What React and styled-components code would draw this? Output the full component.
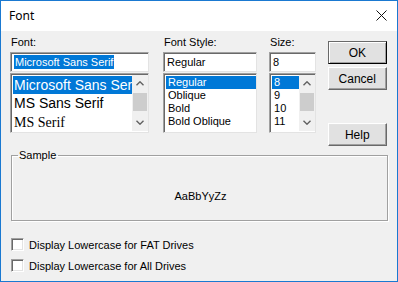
import React from "react";
import styled, { createGlobalStyle } from "styled-components";

const GlobalStyle = createGlobalStyle`
  html, body {
    margin: 0;
    padding: 0;
    background: #ffffff;
  }
  * {
    box-sizing: border-box;
  }
`;

const fonts = [
  { name: "Microsoft Sans Serif", family: "'Liberation Sans', Arial, sans-serif" },
  { name: "MS Sans Serif", family: "'Liberation Sans', Arial, sans-serif" },
  { name: "MS Serif", family: "'Liberation Serif', 'Times New Roman', serif" },
];

const styles = ["Regular", "Oblique", "Bold", "Bold Oblique"];
const sizes = ["8", "9", "10", "11"];

const Chevron = ({ down }) => (
  <svg width="8" height="5" viewBox="0 0 8 5">
    <polyline
      points={down ? "0.5,0.8 4,4.2 7.5,0.8" : "0.5,4.2 4,0.8 7.5,4.2"}
      fill="none"
      stroke="#606060"
      strokeWidth="1.4"
    />
  </svg>
);

const Scroll = () => (
  <ScrollBar>
    <Arrow>
      <Chevron />
    </Arrow>
    <Thumb />
    <Track />
    <Arrow>
      <Chevron down />
    </Arrow>
  </ScrollBar>
);

const App = () => {
  return (
    <>
      <GlobalStyle />
      <Window>
        <TitleBar>
          <span>Font</span>
          <svg width="11" height="11" viewBox="0 0 11 11">
            <path d="M0.5 0.5 L10.5 10.5 M10.5 0.5 L0.5 10.5" stroke="#111" strokeWidth="1" />
          </svg>
        </TitleBar>
        <Body>
          <TopRow>
            <Column $width={139} $gap={14}>
              <Label>Font:</Label>
              <TextBox>
                <Selected>Microsoft Sans Serif</Selected>
              </TextBox>
              <ListBox>
                <Items>
                  {fonts.map((f, i) => (
                    <BigItem key={f.name} $active={i === 0} style={{ fontFamily: f.family }}>
                      {f.name}
                    </BigItem>
                  ))}
                </Items>
                <Scroll />
              </ListBox>
            </Column>
            <Column $width={95} $gap={12}>
              <Label>Font Style:</Label>
              <TextBox>Regular</TextBox>
              <ListBox>
                <Items>
                  {styles.map((s, i) => (
                    <Item key={s} $active={i === 0}>
                      {s}
                    </Item>
                  ))}
                </Items>
              </ListBox>
            </Column>
            <Column $width={47} $gap={11}>
              <Label>Size:</Label>
              <TextBox>8</TextBox>
              <ListBox>
                <Items>
                  {sizes.map((s, i) => (
                    <Item key={s} $active={i === 0}>
                      {s}
                    </Item>
                  ))}
                </Items>
                <Scroll />
              </ListBox>
            </Column>
            <Buttons>
              <Button $default>OK</Button>
              <Button>Cancel</Button>
              <Button $push>Help</Button>
            </Buttons>
          </TopRow>
          <Group>
            <Legend>Sample</Legend>
            <SampleText>AaBbYyZz</SampleText>
          </Group>
          <Checks>
            <CheckRow>
              <CheckBox />
              Display Lowercase for FAT Drives
            </CheckRow>
            <CheckRow>
              <CheckBox />
              Display Lowercase for All Drives
            </CheckRow>
          </Checks>
        </Body>
      </Window>
    </>
  );
};

const Window = styled.div`
  width: 398px;
  height: 282px;
  border: 1px solid #1a79d1;
  background: #f0f0f0;
  display: flex;
  flex-direction: column;
  font-family: "Liberation Sans", Arial, sans-serif;
  font-size: 11px;
  color: #000;
  overflow: hidden;
`;

const TitleBar = styled.div`
  height: 30px;
  flex: none;
  background: #ffffff;
  display: flex;
  align-items: center;
  justify-content: space-between;
  padding: 0 10px 1px 8px;
  font-family: "Noto Sans", "Open Sans", sans-serif;
  font-size: 12px;
`;

const Body = styled.div`
  flex: 1;
  padding: 5px 10px 0 9px;
  display: flex;
  flex-direction: column;
`;

const TopRow = styled.div`
  display: flex;
  align-items: flex-start;
`;

const Column = styled.div`
  width: ${(p) => p.$width}px;
  margin-right: ${(p) => p.$gap}px;
  display: flex;
  flex-direction: column;
`;

const Label = styled.div`
  height: 13px;
  line-height: 13px;
  margin-bottom: 3px;
  padding-left: 1px;
`;

const sunken = `
  background: #ffffff;
  border-style: solid;
  border-width: 1px;
  border-color: #a0a0a0 #e3e3e3 #e3e3e3 #a0a0a0;
  box-shadow: inset 1px 1px 0 #696969;
`;

const TextBox = styled.div`
  ${sunken}
  height: 20px;
  display: flex;
  align-items: center;
  padding-left: 3px;
  white-space: nowrap;
  overflow: hidden;
`;

const Selected = styled.span`
  background: #0078d7;
  color: #ffffff;
  line-height: 14px;
  padding: 0 1px;
`;

const ListBox = styled.div`
  ${sunken}
  margin-top: 1px;
  height: 60px;
  display: flex;
  padding: 2px 0 1px 2px;
  overflow: hidden;
`;

const Items = styled.div`
  flex: 1;
  min-width: 0;
  display: flex;
  flex-direction: column;
`;

const Item = styled.div`
  height: 13px;
  line-height: 13px;
  padding-left: 2px;
  white-space: nowrap;
  overflow: hidden;
  background: ${(p) => (p.$active ? "#0078d7" : "transparent")};
  color: ${(p) => (p.$active ? "#ffffff" : "#000000")};
`;

const BigItem = styled(Item)`
  height: 19px;
  line-height: 19px;
  font-size: 14px;
  padding-left: 1px;
`;

const ScrollBar = styled.div`
  width: 16px;
  flex: none;
  background: #f0f0f0;
  display: flex;
  flex-direction: column;
  margin-top: -1px;
`;

const Arrow = styled.div`
  height: 17px;
  flex: none;
  display: flex;
  align-items: center;
  justify-content: center;
`;

const Thumb = styled.div`
  height: 18px;
  flex: none;
  margin: 1px 1px 0;
  background: #cdcdcd;
`;

const Track = styled.div`
  flex: 1;
`;

const Buttons = styled.div`
  width: 60px;
  margin-left: 1px;
  padding-top: 5px;
  display: flex;
  flex-direction: column;
  gap: 3px;
`;

const Button = styled.div`
  height: 23px;
  margin-top: ${(p) => (p.$push ? "30px" : "0")};
  display: flex;
  align-items: center;
  justify-content: center;
  background: #e1e1e1;
  border-style: solid;
  border-width: 1px;
  border-color: ${(p) =>
    p.$default ? "#696969 #000 #000 #696969" : "#ffffff #696969 #696969 #ffffff"};
  box-shadow: ${(p) =>
    p.$default
      ? "inset 1px 1px 0 #ffffff, inset -1px -1px 0 #a0a0a0"
      : "inset -1px -1px 0 #a0a0a0, inset 1px 1px 0 #e3e3e3"};
  font-size: 12px;
`;

const Group = styled.fieldset`
  margin: 3px 0 0 1px;
  width: 377px;
  height: 72px;
  padding: 0;
  border: 1px solid #a0a0a0;
  box-shadow: 1px 1px 0 #ffffff, inset 1px 1px 0 #ffffff;
  display: flex;
  align-items: center;
  justify-content: center;
`;

const Legend = styled.legend`
  margin-left: 6px;
  padding: 0 2px 0 1px;
  font-size: 11px;
`;

const SampleText = styled.div`
  width: 100%;
  text-align: center;
  padding-top: 29px;
  padding-left: 2px;
`;

const Checks = styled.div`
  margin-top: 13px;
  display: flex;
  flex-direction: column;
`;

const CheckRow = styled.div`
  height: 21px;
  display: flex;
  align-items: center;
  gap: 5px;
  padding-left: 1px;
  white-space: nowrap;
`;

const CheckBox = styled.div`
  width: 13px;
  height: 13px;
  flex: none;
  background: #ffffff;
  border-style: solid;
  border-width: 1px;
  border-color: #a0a0a0 #ffffff #ffffff #a0a0a0;
  box-shadow: inset 1px 1px 0 #696969, inset -1px -1px 0 #e3e3e3;
`;

export default App;
